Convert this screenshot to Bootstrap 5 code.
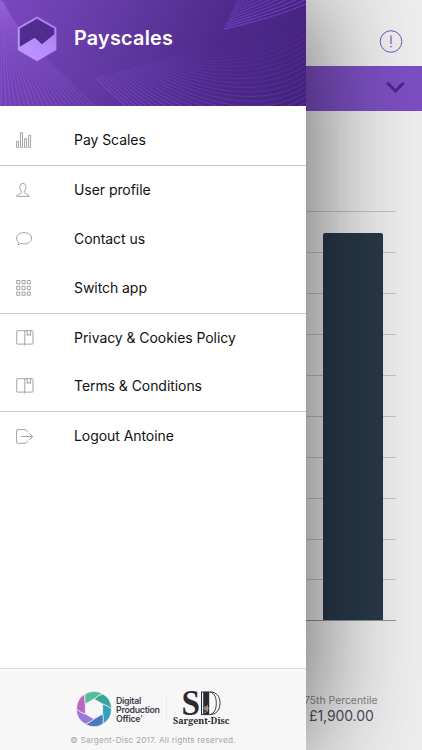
<!DOCTYPE html>
<html lang="en">
<head>
<meta charset="utf-8">
<meta name="viewport" content="width=device-width, initial-scale=1">
<title>Payscales</title>
<link href="https://cdn.jsdelivr.net/npm/bootstrap@5.3.0/dist/css/bootstrap.min.css" rel="stylesheet">
<style>
body{font-family:Inter,"Liberation Sans",sans-serif;background:#eee;color:#111}
.screen{width:422px;height:750px;background:#eee}
.drawer{width:306px;background:#fff;box-shadow:0 0 115px rgba(0,0,0,.64);z-index:2}
.drawer-head{height:106px;background:linear-gradient(112deg,#7a48bf 0%,#6238a2 38%,#4f2a8c 68%,#43207d 100%)}
.app-title{font-size:19.8px;font-weight:600;letter-spacing:.25px;line-height:24px;left:74px;top:26px}
.menu{padding-top:10px}
.menu .item{height:48.9px;padding:0 0 1px 16px;font-size:14px;letter-spacing:-.06px;color:#111}
.menu .item span{line-height:20px}
.menu .ico{width:58px;flex:none}
.menu .rule{height:1px;background:#c9c9cb}
.menu svg{display:block;fill:none;stroke:#8d8d8d;stroke-width:.8}
.drawer-foot{height:82px;background:#f7f7f7;border-top:1px solid #dedede}
.logos{padding:22px 0 0 76px;height:62px}
.dpo{font:600 8.8px/9px Inter,sans-serif;color:#41404d;letter-spacing:-.28px;margin:5px 0 0 4px;width:46px}
.split{width:1px;height:25px;background:#ececec;margin:5px 6px 0 4px}
.legal{font-size:8.2px;letter-spacing:.2px;color:#a6a6a6;line-height:12px;padding-top:3px}
.page{width:176px;left:246px}
.topbar{height:66px;padding:30px 19px 0 0}
.select-bar{height:45px;background:#7d4fc3;padding:15px 17px 0 0}
.plot{margin-top:100px;width:150px;height:410px}
.gridline{height:1px;background:#c2c2c2;margin-bottom:39.95px}
.plot .axis{background:#929292;margin:0}
.column{left:77px;top:22px;width:60px;height:387px;background:#283949;border-radius:2px 2px 0 0}
.stat{padding:73px 0 0 58px}
.stat .caption{font-size:10.4px;line-height:14px;color:#85858a;letter-spacing:0}
.stat .amount{font-size:14px;line-height:16px;color:#4c4f62;padding-left:5px;letter-spacing:-.1px}
</style>
<script src="https://cdn.jsdelivr.net/npm/bootstrap@5.3.0/dist/js/bootstrap.bundle.min.js"></script>
</head>
<body class="m-0 overflow-hidden">
<div class="screen position-relative overflow-hidden">

<main class="page position-absolute top-0 h-100">
  <div class="topbar d-flex justify-content-end">
    <svg width="24" height="24" viewBox="0 0 24 24" fill="none" stroke="#7d4fc3" stroke-width="1"><circle cx="12" cy="11.5" r="10.8"/><path d="M12 5.5v8.5" stroke-width="1.2"/><circle cx="12" cy="16.7" r=".8" fill="#7d4fc3" stroke="none"/></svg>
  </div>
  <div class="select-bar d-flex justify-content-end">
    <svg width="19" height="13" viewBox="0 0 19 13" fill="none" stroke="#4b2789" stroke-width="3"><path d="M1.2 1.7l8.3 8.1 8.3-8.1"/></svg>
  </div>
  <div class="plot position-relative">
    <div class="gridline"></div><div class="gridline"></div><div class="gridline"></div><div class="gridline"></div><div class="gridline"></div><div class="gridline"></div><div class="gridline"></div><div class="gridline"></div><div class="gridline"></div><div class="gridline"></div><div class="gridline axis"></div>
    <div class="column position-absolute"></div>
  </div>
  <div class="stat">
    <div class="caption text-nowrap">75th Percentile</div>
    <div class="amount">£1,900.00</div>
  </div>
</main>

<aside class="drawer position-relative h-100 d-flex flex-column">
  <header class="drawer-head position-relative overflow-hidden">
    <svg id="waves" class="position-absolute top-0 start-0" width="306" height="106" viewBox="0 0 306 106" fill="none"></svg>
    <svg class="position-absolute" style="left:17px;top:16px" width="40" height="46" viewBox="0 0 40 46">
      <defs><linearGradient id="hx" x1="0" y1="1" x2="1" y2="0"><stop offset="0" stop-color="#c198ff"/><stop offset=".5" stop-color="#b68cfb"/><stop offset="1" stop-color="#a47be8"/></linearGradient></defs>
      <path d="M20 .5L39.4 11.5V34L20 45.2.8 34V11.5z" fill="url(#hx)"/>
      <path d="M20 2.8L37.2 12.6V18.2L25 28.3 17.7 21.8 2.8 30.8V12.6z" fill="#502b90"/>
    </svg>
    <div class="app-title position-absolute text-white">Payscales</div>
  </header>

  <nav class="menu flex-grow-1">
    <div class="item d-flex align-items-center"><div class="ico"><svg width="16" height="16" viewBox="0 0 16 16"><path d="M.6 9.5h2v5.9h-2zM4.5.6h2v14.8h-2zM8.6 6.7h2v8.7h-2zM12.6 3.4h2v12h-2z"/></svg></div><span>Pay Scales</span></div>
    <div class="rule"></div>
    <div class="item d-flex align-items-center"><div class="ico"><svg width="15" height="14" viewBox="0 0 15 14"><path d="M5.4 8.2C4 6.7 3.8 4.8 3.9 3.2 4.1 1.4 5.2.5 6.9.5s2.8.9 3 2.7c.1 1.6-.1 3.5-1.5 5v1.4c0 1.6 4.5 1.3 4.8 3.8H.6c.3-2.5 4.8-2.2 4.8-3.8z"/></svg></div><span>User profile</span></div>
    <div class="item d-flex align-items-center"><div class="ico"><svg width="17" height="14" viewBox="0 0 17 14"><path d="M2.1 12.8C2.6 12 2.7 11 2.3 10 1.1 8.9.5 7.6.5 6.2.5 3 3.9.6 8.1.6s7.5 2.4 7.5 5.6-3.3 5.7-7.5 5.7c-1.2 0-2.3-.2-3.4-.6-.8.8-1.7 1.3-2.6 1.5z"/></svg></div><span>Contact us</span></div>
    <div class="item d-flex align-items-center"><div class="ico"><svg width="15" height="16" viewBox="0 0 15 16"><path d="M.7.5h3.1v3.3H.7zM6 .5h3.1v3.3H6zM11.2.5h3.1v3.3h-3.1zM.7 6.3h3.1v3.3H.7zM6 6.3h3.1v3.3H6zM11.2 6.3h3.1v3.3h-3.1zM.7 12h3.1v3.3H.7zM6 12h3.1v3.3H6zM11.2 12h3.1v3.3h-3.1z" stroke-linejoin="round"/></svg></div><span>Switch app</span></div>
    <div class="rule"></div>
    <div class="item d-flex align-items-center"><div class="ico"><svg width="18" height="16" viewBox="0 0 18 16"><path d="M1.5.7h14.8q.7 0 .7.7v12q0 .7-.7.7H1.5q-.8 0-.8-.7v-12q0-.7.8-.7zM8.8.7v14.8M11.2.7v5l1.7-1.5 1.7 1.5v-5"/></svg></div><span>Privacy &amp; Cookies Policy</span></div>
    <div class="item d-flex align-items-center"><div class="ico"><svg width="18" height="16" viewBox="0 0 18 16"><path d="M1.5.7h14.8q.7 0 .7.7v12q0 .7-.7.7H1.5q-.8 0-.8-.7v-12q0-.7.8-.7zM8.8.7v14.8M11.2.7v5l1.7-1.5 1.7 1.5v-5"/></svg></div><span>Terms &amp; Conditions</span></div>
    <div class="rule"></div>
    <div class="item d-flex align-items-center"><div class="ico"><svg width="18" height="15" viewBox="0 0 18 15"><path d="M11.4 3.4V2.2L9.8.6H2Q.6.6.6 2v11q0 1.3 1.4 1.3h7.8l1.6-1.6v-1.1M5 7.5h11.7M13.2 4.2l3.5 3.3-3.5 3.3"/></svg></div><span>Logout Antoine</span></div>
  </nav>

  <footer class="drawer-foot">
    <div class="logos d-flex align-items-start">
      <svg class="flex-shrink-0" width="36" height="36" viewBox="-18 -18 36 36">
        <g stroke="#f7f7f7" stroke-width=".6" stroke-linejoin="round">
          <path fill="#3aa596" d="M0-10L8.7-5Q14.5-3 17.5.1A17.5 17.5 0 0 0 8.8-15.1Q4.5-14 0-10z"/>
          <path fill="#35a0bd" transform="rotate(60)" d="M0-10L8.7-5Q14.5-3 17.5.1A17.5 17.5 0 0 0 8.8-15.1Q4.5-14 0-10z"/>
          <path fill="#4a78b8" transform="rotate(120)" d="M0-10L8.7-5Q14.5-3 17.5.1A17.5 17.5 0 0 0 8.8-15.1Q4.5-14 0-10z"/>
          <path fill="#9a78dd" transform="rotate(180)" d="M0-10L8.7-5Q14.5-3 17.5.1A17.5 17.5 0 0 0 8.8-15.1Q4.5-14 0-10z"/>
          <path fill="#bb67bf" transform="rotate(240)" d="M0-10L8.7-5Q14.5-3 17.5.1A17.5 17.5 0 0 0 8.8-15.1Q4.5-14 0-10z"/>
          <path fill="#58bd9b" transform="rotate(300)" d="M0-10L8.7-5Q14.5-3 17.5.1A17.5 17.5 0 0 0 8.8-15.1Q4.5-14 0-10z"/>
        </g>
      </svg>
      <div class="dpo">Digital<br>Production<br>Office<span class="fw-normal">'</span></div>
      <div class="split"></div>
      <svg class="flex-shrink-0" width="60" height="38" viewBox="0 0 60 38" fill="#2b2b2f">
        <text x="8.4" y="24" font-family="Liberation Serif" font-weight="700" font-size="35" textLength="18.5" lengthAdjust="spacingAndGlyphs">S</text>
        <rect x="28" y=".8" width="1" height="23"/><rect x="30.2" y=".8" width="6" height="23"/>
        <path d="M28 1h9c6.6 0 10 4.3 10 11.3S43 23.6 36.5 23.6H28M37.5 1c4 1.5 5.8 5.5 5.8 11.3s-2 9.9-6 11.3" fill="none" stroke="#2b2b2f" stroke-width=".9"/>
        <path d="M33 16q-2-1-1.8 1.5t2 .7v-2.5 5q-.5 1.6-1.8.6M34.5 14v6.5m0-2.7q2-2 2 .2v2.5" fill="none" stroke="#ddd" stroke-width=".6"/>
        <text x="0" y="33.4" font-family="Noto Serif,Liberation Serif,serif" font-weight="700" font-size="9.6" textLength="56.5" lengthAdjust="spacingAndGlyphs">Sargent-Disc</text>
      </svg>
    </div>
    <div class="legal text-center">© Sargent-Disc 2017. All rights reserved.</div>
  </footer>
</aside>
</div>
<script>
// Each family of lines is blended between two cubic curves [x0,y0, c1, c2, x1,y1].
const families=[
  {n:22,a:[0,0,0,30,0,70,-4,106],b:[3,2,18,34,52,66,97,108],c:'#9a63dd',o:.5},
  {n:28,a:[96,78,140,125,240,200,306,160],b:[178,55,220,56,265,46,306,18],c:'#8050cf',o:.6},
  {n:11,a:[224,29,250,23,285,14,310,2],b:[236,3,245,-4,260,-14,280,-30],c:'#7b4bd6',o:.62}
];
const svg=document.getElementById('waves');
families.forEach((f,k)=>{
  for(let i=0;i<f.n;i++){
    const t=i/(f.n-1),p=f.a.map((v,j)=>(v+(f.b[j]-v)*t).toFixed(1));
    const e=document.createElementNS('http://www.w3.org/2000/svg','path');
    e.setAttribute('d',`M${p[0]} ${p[1]}C${p.slice(2).join(' ')}`);
    e.setAttribute('stroke',f.c);
    e.setAttribute('stroke-width',k===2?1.3:1.1);
    e.setAttribute('opacity',(k===1?f.o*(1-.88*t):f.o*(1-.4*t)).toFixed(2));
    svg.appendChild(e);
  }
});
</script>
</body>
</html>
